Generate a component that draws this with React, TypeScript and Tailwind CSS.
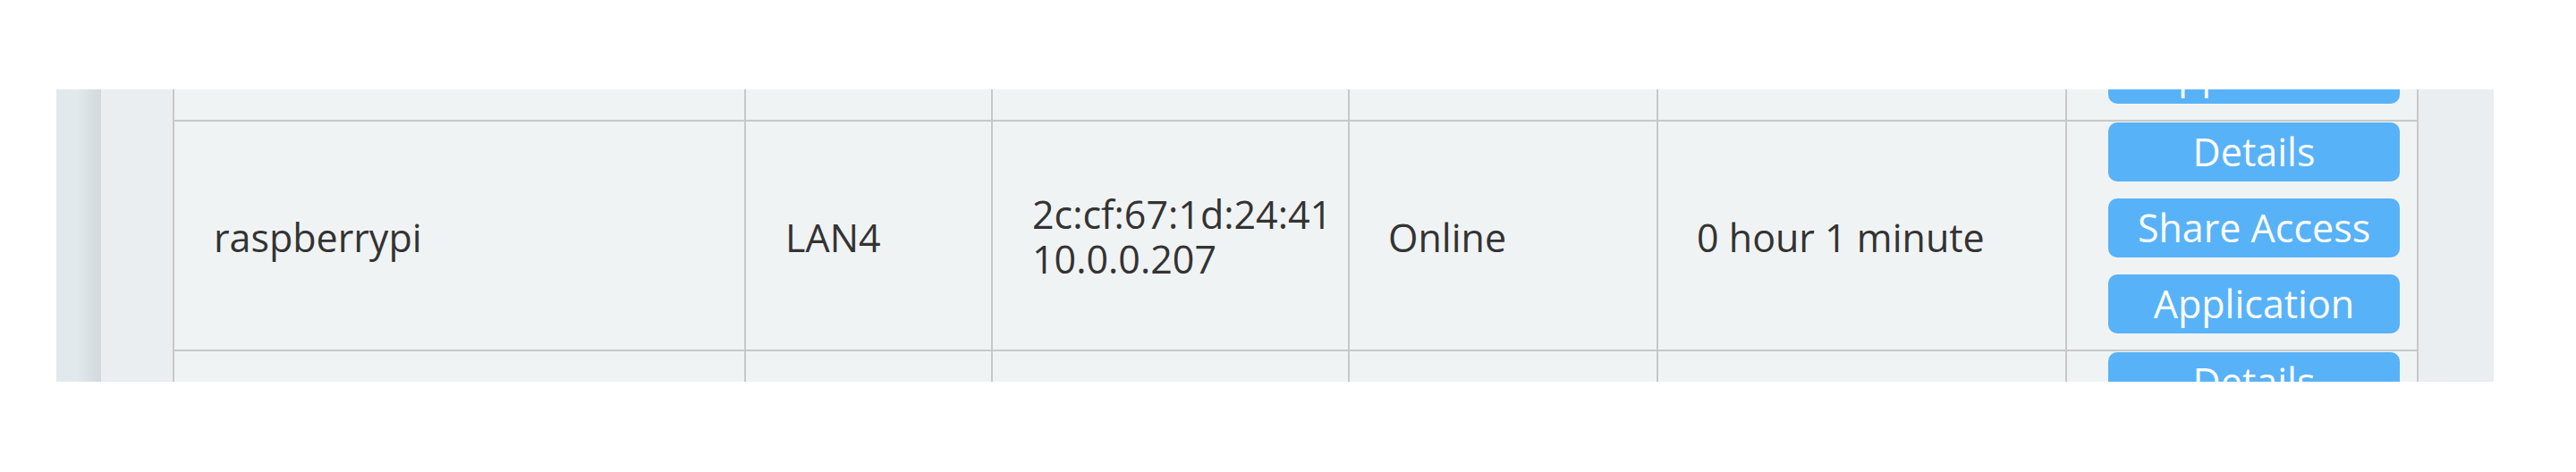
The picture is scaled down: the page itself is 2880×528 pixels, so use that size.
type Device = {
  name: string;
  port: string;
  mac: string;
  ip: string;
  status: string;
  uptime: string;
};

const devices: Device[] = [
  { name: 'android-3f9e', port: 'LAN2', mac: 'a4:5e:60:c2:11:8b', ip: '10.0.0.186', status: 'Online', uptime: '3 hour 12 minute' },
  { name: 'raspberrypi', port: 'LAN4', mac: '2c:cf:67:1d:24:41', ip: '10.0.0.207', status: 'Online', uptime: '0 hour 1 minute' },
  { name: 'DESKTOP-K2J8', port: 'LAN1', mac: '70:85:c2:4a:9d:03', ip: '10.0.0.143', status: 'Online', uptime: '5 hour 40 minute' },
];

const actions = ['Details', 'Share Access', 'Application'];

function DeviceRow({ d }: { d: Device }) {
  return (
    <div className="grid grid-cols-[639px_276px_399px_345px_457px_393px] border-b-2 border-[#c8c8c8] bg-[#f0f3f4]">
      <div className="flex items-center border-r-2 border-[#c8c8c8] pt-[6px] pl-[44px]">{d.name}</div>
      <div className="flex items-center border-r-2 border-[#c8c8c8] pt-[6px] pl-[44px]">{d.port}</div>
      <div className="flex items-center border-r-2 border-[#c8c8c8] pt-[2px] pl-[44px] leading-[50px]">
        <p>
          {d.mac}
          <br />
          {d.ip}
        </p>
      </div>
      <div className="flex items-center border-r-2 border-[#c8c8c8] pt-[6px] pl-[43px]">{d.status}</div>
      <div className="flex items-center border-r-2 border-[#c8c8c8] pt-[6px] pl-[43px]">{d.uptime}</div>
      <div className="flex flex-col gap-[19px] border-r-2 border-[#c8c8c8] pl-[46px] pt-px pb-[18px]">
        {actions.map((a) => (
          <button
            key={a}
            className="flex h-[66px] w-[326px] items-center justify-center rounded-[10px] bg-[#58b2f8] text-white"
          >
            {a}
          </button>
        ))}
      </div>
    </div>
  );
}

export default function App() {
  return (
    <div className="min-h-[528px] bg-white pt-[100px] pl-[63px] font-['Open_Sans',sans-serif] text-[43px] text-[#333333]">
      <div className="flex h-[327px] w-[2725px] overflow-hidden bg-[#eaeef1]">
        {/* left scroll shadow */}
        <div className="w-[50px] shrink-0 bg-linear-to-r from-[#e2e9ed] from-45% to-[#d2d8dc]" />
        <div className="w-[80px] shrink-0" />
        {/* table, scrolled */}
        <div className="-mt-[221px] w-[2511px] shrink-0 self-start border-l-2 border-[#c8c8c8]">
          {devices.map((d) => (
            <DeviceRow key={d.mac} d={d} />
          ))}
        </div>
      </div>
    </div>
  );
}
